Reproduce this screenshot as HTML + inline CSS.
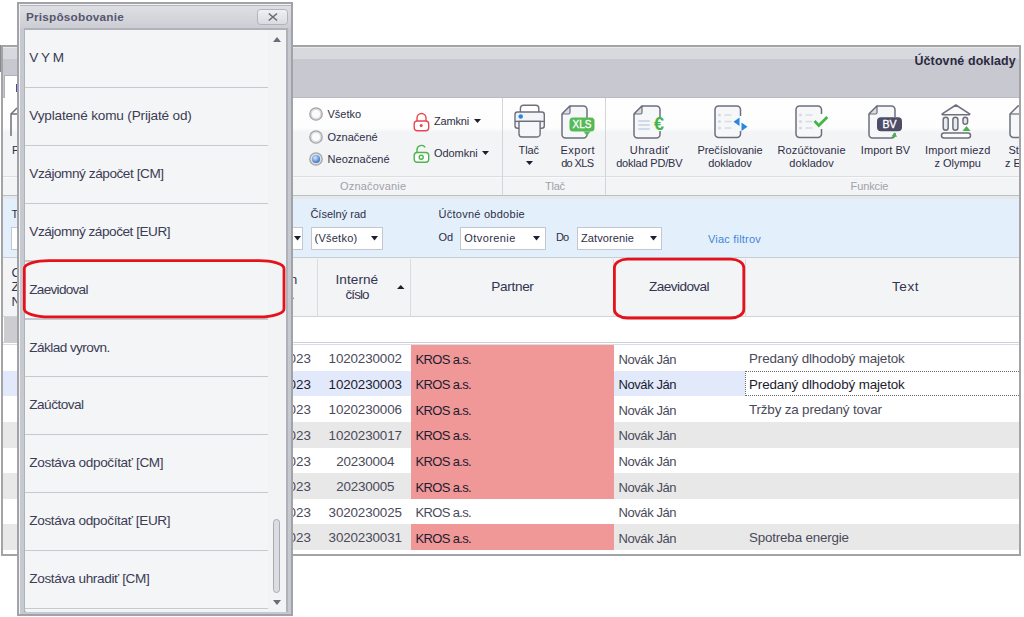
<!DOCTYPE html><html><head><meta charset="utf-8"><style>
*{box-sizing:border-box;margin:0;padding:0}
html,body{width:1024px;height:617px;overflow:hidden;background:#fff;font-family:"Liberation Sans",sans-serif;color:#2e2e44}
.a{position:absolute}
.t{position:absolute;white-space:nowrap;line-height:1}
svg{position:absolute;overflow:visible}
</style></head><body>
<div class="a" style="left:1px;top:45px;width:1020px;height:511px;border:2px solid #a4a4a6;background:#fff"></div>
<div class="a" style="left:0px;top:45px;width:1px;height:27px;background:#8a8a8c"></div>
<div class="a" style="left:3px;top:47px;width:1016px;height:1px;background:#e8e9ec"></div>
<div class="a" style="left:3px;top:48px;width:1016px;height:11px;background:#d8d9de"></div>
<div class="a" style="left:3px;top:59px;width:1016px;height:39px;background:#c8c9d0"></div>
<div class="a" style="left:3px;top:97px;width:1016px;height:1px;background:#babbc2"></div>
<div class="t" style="left:914.5px;top:55.2px;font-size:12.4px;color:#2a2a40;letter-spacing:0.14px;font-weight:bold;">Účtovné doklady</div>
<div class="a" style="left:4px;top:75px;width:20px;height:23px;background:#fff;border-left:1px solid #b0b0b8;border-top:1px solid #b0b0b8"></div>
<div class="a" style="left:15.5px;top:84px;width:1.5px;height:8px;background:#4848a0"></div>
<div class="a" style="left:3px;top:98px;width:1016px;height:97px;background:linear-gradient(#fefefe 0px,#fdfdfd 30px,#f3f4f6 34px,#f3f4f6 100%)"></div>
<div class="a" style="left:3px;top:176px;width:1016px;height:1px;background:#dcdde1"></div>
<div class="a" style="left:3px;top:177px;width:1016px;height:1px;background:#fbfbfc"></div>
<div class="a" style="left:3px;top:194.5px;width:1016px;height:2px;background:#bdbec3"></div>
<svg style="left:9px;top:107px" width="10" height="30" viewBox="0 0 10 30"><path d="M8 1L2 7v22" fill="none" stroke="#6e6f7c" stroke-width="1.5"/><path d="M2 7h8" stroke="#6e6f7c" stroke-width="1.5"/></svg>
<div class="t" style="left:12px;top:144.69px;font-size:11px;color:#2e2e46;">P</div>
<div class="a" style="left:502px;top:98px;width:1px;height:97px;background:#d4d5da"></div>
<div class="a" style="left:605px;top:98px;width:1px;height:97px;background:#d4d5da"></div>
<svg width="0" height="0" style="left:0;top:0"><defs><radialGradient id="rg" cx="0.4" cy="0.35" r="0.75"><stop offset="0" stop-color="#d6e8fb"/><stop offset="0.5" stop-color="#7aa8e6"/><stop offset="1" stop-color="#2e5fb0"/></radialGradient></defs></svg>
<svg style="left:316.2px;top:114.2px" width="1" height="1"><circle cx="0" cy="0" r="6.2" fill="#dcdde1" stroke="#a4a5ab" stroke-width="1.3"/><circle cx="0" cy="0" r="4" fill="#fbfbfc"/></svg>
<svg style="left:316.2px;top:136.7px" width="1" height="1"><circle cx="0" cy="0" r="6.2" fill="#dcdde1" stroke="#a4a5ab" stroke-width="1.3"/><circle cx="0" cy="0" r="4" fill="#fbfbfc"/></svg>
<svg style="left:316.2px;top:159.1px" width="1" height="1"><circle cx="0" cy="0" r="6.2" fill="#dcdde1" stroke="#a4a5ab" stroke-width="1.3"/><circle cx="0" cy="0" r="4" fill="url(#rg)"/></svg>
<div class="t" style="left:327.5px;top:109.19px;font-size:11px;color:#2e2e46;">Všetko</div>
<div class="t" style="left:327.5px;top:132.19px;font-size:11px;color:#2e2e46;">Označené</div>
<div class="t" style="left:327.5px;top:154.09px;font-size:11px;color:#2e2e46;letter-spacing:0.04px;">Neoznačené</div>
<div class="t" style="left:340.1px;top:181.09px;font-size:11px;color:#a0a1aa;letter-spacing:0.17px;">Označovanie</div>
<svg style="left:413px;top:112px" width="17" height="20" viewBox="0 0 17 20"><path d="M4 9V6a4.5 4.5 0 0 1 9 0v3" fill="none" stroke="#e8474f" stroke-width="1.4"/><rect x="1.2" y="9" width="14.5" height="9.8" rx="3" fill="#fff" stroke="#e8474f" stroke-width="1.4"/><circle cx="8.2" cy="13.6" r="1.5" fill="#e8474f"/></svg>
<div class="t" style="left:433.9px;top:116.09px;font-size:11px;color:#2e2e46;letter-spacing:-0.15px;">Zamkni</div>
<svg style="left:473.5px;top:119px" width="7" height="4"><path d="M0 0h7L3.5 4z" fill="#1e1e2e"/></svg>
<svg style="left:413px;top:143.5px" width="17" height="20" viewBox="0 0 17 20"><path d="M4 8.5V6a4.5 4.5 0 0 1 8.2-2.6" fill="none" stroke="#4db44e" stroke-width="1.4"/><rect x="1.2" y="8.5" width="14.5" height="9.8" rx="3" fill="#fff" stroke="#4db44e" stroke-width="1.4"/><circle cx="8.2" cy="13.2" r="2" fill="none" stroke="#4db44e" stroke-width="1.4"/></svg>
<div class="t" style="left:433.9px;top:147.69px;font-size:11px;color:#2e2e46;letter-spacing:-0.02px;">Odomkni</div>
<svg style="left:482px;top:151px" width="7" height="4"><path d="M0 0h7L3.5 4z" fill="#1e1e2e"/></svg>
<svg style="left:513px;top:104px" width="34" height="35" viewBox="0 0 34 35"><rect x="7.4" y="1.2" width="18.4" height="9" rx="3" fill="#fff" stroke="#6e6f7c" stroke-width="1.4"/><rect x="2" y="8" width="29.3" height="16.2" rx="2.5" fill="#f3f4f7" stroke="#6e6f7c" stroke-width="1.4"/><line x1="2" y1="17.4" x2="31.3" y2="17.4" stroke="#6e6f7c" stroke-width="1.4"/><path d="M6 17.4V30a3 3 0 0 0 3 3H24.1a3 3 0 0 0 3 -3V17.4z" fill="#f6f7f9" stroke="#6e6f7c" stroke-width="1.4"/><circle cx="7.7" cy="12.5" r="2.3" fill="#2a86e0"/></svg>
<div class="t" style="left:518.6px;top:144.59px;font-size:11px;color:#2e2e46;letter-spacing:-0.13px;">Tlač</div>
<svg style="left:526px;top:160.7px" width="7" height="4"><path d="M0 0h7L3.5 4z" fill="#1e1e2e"/></svg>
<svg style="left:560.5px;top:104.5px" width="36" height="35" viewBox="0 0 36 35"><path d="M9 1H22.5a3.5 3.5 0 0 1 3.5 3.5V29.5a3.5 3.5 0 0 1 -3.5 3.5H4.5a3.5 3.5 0 0 1 -3.5 -3.5V9z" fill="#f6f7f9"/><path d="M1 9L9 1H22.5a3.5 3.5 0 0 1 3.5 3.5V13M26 27V29.5a3.5 3.5 0 0 1 -3.5 3.5H4.5a3.5 3.5 0 0 1 -3.5 -3.5V9" fill="none" stroke="#6e6f7c" stroke-width="1.5" stroke-linejoin="round"/><path d="M9 1L1 9H7.5a1.5 1.5 0 0 0 1.5 -1.5z" fill="#dcdee6" stroke="#6e6f7c" stroke-width="1.2" stroke-linejoin="round"/><rect x="8.5" y="12.5" width="25" height="14" rx="3.5" fill="#56bb57"/><path d="M22.5 26.5h7l-3.5 4.5z" fill="#56bb57"/><text x="21" y="23" font-size="10" font-family="Liberation Sans" fill="#fff" text-anchor="middle" stroke="#fff" stroke-width="0.3">XLS</text></svg>
<div class="t" style="left:560.55px;top:144.59px;font-size:11px;color:#2e2e46;letter-spacing:0.46px;">Export</div>
<div class="t" style="left:561.15px;top:157.69px;font-size:11px;color:#2e2e46;letter-spacing:-0.64px;">do XLS</div>
<div class="t" style="left:545.0px;top:181.09px;font-size:11px;color:#a0a1aa;letter-spacing:-0.26px;">Tlač</div>
<svg style="left:632.5px;top:104.5px" width="34" height="35" viewBox="0 0 34 35"><path d="M9 1H23.5a3.5 3.5 0 0 1 3.5 3.5V29.5a3.5 3.5 0 0 1 -3.5 3.5H4.5a3.5 3.5 0 0 1 -3.5 -3.5V9z" fill="#f6f7f9"/><path d="M1 9L9 1H23.5a3.5 3.5 0 0 1 3.5 3.5V12M27 26V29.5a3.5 3.5 0 0 1 -3.5 3.5H4.5a3.5 3.5 0 0 1 -3.5 -3.5V9" fill="none" stroke="#6e6f7c" stroke-width="1.5" stroke-linejoin="round"/><path d="M9 1L1 9H7.5a1.5 1.5 0 0 0 1.5 -1.5z" fill="#dcdee6" stroke="#6e6f7c" stroke-width="1.2" stroke-linejoin="round"/><rect x="5" y="15" width="12" height="2" rx="1" fill="#cfdaea"/><rect x="5" y="19" width="12" height="2" rx="1" fill="#cfdaea"/><rect x="5" y="23" width="12" height="2" rx="1" fill="#cfdaea"/><text x="26" y="24.5" font-size="18" font-family="Liberation Sans" font-weight="bold" fill="#45b548" text-anchor="middle">€</text></svg>
<div class="t" style="left:629.85px;top:144.59px;font-size:11px;color:#2e2e46;letter-spacing:0.43px;">Uhradiť</div>
<div class="t" style="left:616.2px;top:157.69px;font-size:11px;color:#2e2e46;letter-spacing:-0.19px;">doklad PD/BV</div>
<svg style="left:713.5px;top:104.5px" width="36" height="35" viewBox="0 0 36 35"><path d="M4.5 1H23a3.5 3.5 0 0 1 3.5 3.5V29a3.5 3.5 0 0 1 -3.5 3.5H4.5A3.5 3.5 0 0 1 1 29V4.5A3.5 3.5 0 0 1 4.5 1z" fill="#f6f7f9"/><path d="M26.5 26V29a3.5 3.5 0 0 1 -3.5 3.5H4.5A3.5 3.5 0 0 1 1 29V4.5A3.5 3.5 0 0 1 4.5 1H23a3.5 3.5 0 0 1 3.5 3.5V11" fill="none" stroke="#6e6f7c" stroke-width="1.5"/><circle cx="5.5" cy="10" r="1.6" fill="#d6dbe4"/><circle cx="5.5" cy="16.5" r="1.6" fill="#d6dbe4"/><circle cx="5.5" cy="23" r="1.6" fill="#d6dbe4"/><rect x="10.5" y="9.3" width="7" height="1.5" fill="#d6dbe4"/><rect x="10.5" y="15.8" width="7" height="1.5" fill="#d6dbe4"/><rect x="10.5" y="22.3" width="7" height="1.5" fill="#d6dbe4"/><path d="M25.5 12.5v8.5l-6-4.25z" fill="#2a86e0"/><path d="M27.5 17.5v8.5l6-4.25z" fill="#2a86e0"/></svg>
<div class="t" style="left:697.4px;top:144.59px;font-size:11px;color:#2e2e46;letter-spacing:-0.07px;">Prečíslovanie</div>
<div class="t" style="left:708.15px;top:157.69px;font-size:11px;color:#2e2e46;letter-spacing:-0.05px;">dokladov</div>
<svg style="left:794.5px;top:104.5px" width="36" height="35" viewBox="0 0 36 35"><path d="M4.5 1H23a3.5 3.5 0 0 1 3.5 3.5V29a3.5 3.5 0 0 1 -3.5 3.5H4.5A3.5 3.5 0 0 1 1 29V4.5A3.5 3.5 0 0 1 4.5 1z" fill="#f6f7f9"/><path d="M26.5 24V29a3.5 3.5 0 0 1 -3.5 3.5H4.5A3.5 3.5 0 0 1 1 29V4.5A3.5 3.5 0 0 1 4.5 1H23a3.5 3.5 0 0 1 3.5 3.5V9" fill="none" stroke="#6e6f7c" stroke-width="1.5"/><circle cx="5.5" cy="10" r="1.6" fill="#d6dbe4"/><circle cx="5.5" cy="16.5" r="1.6" fill="#d6dbe4"/><circle cx="5.5" cy="23" r="1.6" fill="#d6dbe4"/><rect x="10.5" y="9.3" width="7" height="1.5" fill="#d6dbe4"/><rect x="10.5" y="15.8" width="7" height="1.5" fill="#d6dbe4"/><rect x="10.5" y="22.3" width="7" height="1.5" fill="#d6dbe4"/><path d="M19.5 16l4.3 4.5 8.5-8.5" fill="none" stroke="#45b548" stroke-width="2.8"/></svg>
<div class="t" style="left:777.45px;top:144.59px;font-size:11px;color:#2e2e46;letter-spacing:0.13px;">Rozúčtovanie</div>
<div class="t" style="left:789.35px;top:157.69px;font-size:11px;color:#2e2e46;letter-spacing:0.04px;">dokladov</div>
<svg style="left:868px;top:104.5px" width="36" height="35" viewBox="0 0 36 35"><path d="M9 1H23.5a3.5 3.5 0 0 1 3.5 3.5V29.5a3.5 3.5 0 0 1 -3.5 3.5H4.5a3.5 3.5 0 0 1 -3.5 -3.5V9z" fill="#f6f7f9"/><path d="M1 9L9 1H23.5a3.5 3.5 0 0 1 3.5 3.5V12M27 28V29.5a3.5 3.5 0 0 1 -3.5 3.5H4.5a3.5 3.5 0 0 1 -3.5 -3.5V9" fill="none" stroke="#6e6f7c" stroke-width="1.5" stroke-linejoin="round"/><path d="M9 1L1 9H7.5a1.5 1.5 0 0 0 1.5 -1.5z" fill="#dcdee6" stroke="#6e6f7c" stroke-width="1.2" stroke-linejoin="round"/><rect x="9" y="12.3" width="25" height="14" rx="4" fill="#4e4c66"/><text x="21.5" y="23" font-size="10.5" font-family="Liberation Sans" fill="#fff" stroke="#fff" stroke-width="0.35" text-anchor="middle">BV</text><path d="M23.5 31.8l2.8-4.5 2.8 4.5z" fill="#45b548"/></svg>
<div class="t" style="left:860.8px;top:144.59px;font-size:11px;color:#2e2e46;letter-spacing:0.06px;">Import BV</div>
<svg style="left:940px;top:104px" width="32" height="35" viewBox="0 0 32 35"><path d="M2.2 9.8L15.9 1 29.6 9.8a0.6 0.6 0 0 1 -0.3 1H2.5a0.6 0.6 0 0 1 -0.3 -1z" fill="#fbfbfc" stroke="#6e6f7c" stroke-width="1.5" stroke-linejoin="round"/><rect x="3.2" y="13.3" width="5" height="13" rx="2.5" fill="#e6ebf2" stroke="#6e6f7c" stroke-width="1.5"/><rect x="12.9" y="13.3" width="5" height="13" rx="2.5" fill="#e6ebf2" stroke="#6e6f7c" stroke-width="1.5"/><rect x="23" y="13.3" width="4.6" height="7" rx="2.3" fill="#e6ebf2" stroke="#6e6f7c" stroke-width="1.5"/><path d="M22.5 27l4-5 4 5z" fill="#45b548"/><rect x="1.5" y="29" width="29" height="5" rx="2.5" fill="#fbfbfc" stroke="#6e6f7c" stroke-width="1.5"/></svg>
<div class="t" style="left:925.1px;top:144.59px;font-size:11px;color:#2e2e46;letter-spacing:0.15px;">Import miezd</div>
<div class="t" style="left:934.45px;top:157.69px;font-size:11px;color:#2e2e46;letter-spacing:0.01px;">z Olympu</div>
<svg style="left:1008.5px;top:104.5px" width="14" height="35" viewBox="0 0 14 35"><path d="M14 1H9L1 9V29a3.5 3.5 0 0 0 3.5 3.5H14" fill="#f6f7f9" stroke="#6e6f7c" stroke-width="1.5"/><path d="M1 9H14" stroke="#6e6f7c" stroke-width="1.2"/></svg>
<div class="t" style="left:1008.5px;top:144.59px;font-size:11px;color:#2e2e46;">St</div>
<div class="t" style="left:1005px;top:157.69px;font-size:11px;color:#2e2e46;">z E</div>
<div class="t" style="left:850.5px;top:181.09px;font-size:11px;color:#a0a1aa;letter-spacing:-0.09px;">Funkcie</div>
<div class="a" style="left:1019px;top:47px;width:2px;height:509px;background:#a4a4a6"></div>
<div class="a" style="left:1021px;top:44px;width:3px;height:513px;background:#fff"></div>
<div class="a" style="left:3px;top:196px;width:1016px;height:61px;background:#e3f0fb"></div>
<div class="a" style="left:3px;top:196px;width:1016px;height:3px;background:#e7e8eb"></div>
<div class="a" style="left:3px;top:257px;width:1016px;height:1px;background:#c8ccd3"></div>
<div class="t" style="left:310.4px;top:208.79px;font-size:11px;color:#2e2e46;letter-spacing:0.02px;">Číselný rad</div>
<div class="a" style="left:270px;top:227px;width:33px;height:23px;background:#fff;border:1px solid #c3c8d0"></div>
<svg style="left:294px;top:236.3px" width="7" height="4.5"><path d="M0 0h7L3.5 4.5z" fill="#1e1e2e"/></svg>
<div class="a" style="left:311px;top:227px;width:72px;height:23px;background:#fff;border:1px solid #c3c8d0"></div>
<div class="t" style="left:314.5px;top:233.19px;font-size:11px;color:#2e2e46;letter-spacing:0.25px;">(Všetko)</div>
<svg style="left:371.2px;top:236.3px" width="7" height="4.5"><path d="M0 0h7L3.5 4.5z" fill="#1e1e2e"/></svg>
<div class="t" style="left:438.5px;top:209.49px;font-size:11px;color:#2e2e46;letter-spacing:0.26px;">Účtovné obdobie</div>
<div class="t" style="left:438.5px;top:232.29px;font-size:11px;color:#2e2e46;letter-spacing:0.03px;">Od</div>
<div class="a" style="left:460px;top:227px;width:86px;height:23px;background:#fff;border:1px solid #c3c8d0"></div>
<div class="t" style="left:464.3px;top:233.19px;font-size:11px;color:#2e2e46;letter-spacing:0.41px;">Otvorenie</div>
<svg style="left:533px;top:236.3px" width="7" height="4.5"><path d="M0 0h7L3.5 4.5z" fill="#1e1e2e"/></svg>
<div class="t" style="left:556px;top:232.29px;font-size:11px;color:#2e2e46;letter-spacing:-1.06px;">Do</div>
<div class="a" style="left:577px;top:227px;width:85px;height:23px;background:#fff;border:1px solid #c3c8d0"></div>
<div class="t" style="left:581px;top:233.19px;font-size:11px;color:#2e2e46;letter-spacing:0.11px;">Zatvorenie</div>
<svg style="left:649.5px;top:236.3px" width="7" height="4.5"><path d="M0 0h7L3.5 4.5z" fill="#1e1e2e"/></svg>
<div class="t" style="left:708px;top:234.19px;font-size:11px;color:#3f86da;letter-spacing:0.2px;">Viac filtrov</div>
<div class="a" style="left:3px;top:258px;width:1016px;height:58px;background:#f3f4f6"></div>
<div class="a" style="left:3px;top:315.5px;width:1016px;height:1.2px;background:#d2d3d8"></div>
<div class="a" style="left:317px;top:259px;width:1px;height:56.5px;background:#dadbe0"></div>
<div class="a" style="left:410px;top:259px;width:1px;height:56.5px;background:#dadbe0"></div>
<div class="a" style="left:613px;top:259px;width:1px;height:56.5px;background:#dadbe0"></div>
<div class="a" style="left:745px;top:259px;width:1px;height:56.5px;background:#dadbe0"></div>
<div class="a" style="left:3px;top:316.7px;width:1016px;height:25.8px;background:#fff"></div>
<div class="a" style="left:3px;top:342px;width:1016px;height:1.2px;background:#d0d1d8"></div>
<div class="a" style="left:3px;top:344.2px;width:1016px;height:1px;background:#dcdde2"></div>
<div class="t" style="left:335.5px;top:272.79px;font-size:13.6px;color:#34344e;letter-spacing:0.06px;">Interné</div>
<div class="t" style="left:345.5px;top:287.86px;font-size:13.4px;color:#34344e;letter-spacing:-0.89px;">číslo</div>
<svg style="left:397px;top:284.7px" width="7.5" height="4"><path d="M0 4h7.5L3.75 0z" fill="#1e1e2e"/></svg>
<div class="t" style="left:491.3px;top:279.99px;font-size:13.6px;color:#34344e;letter-spacing:-0.33px;">Partner</div>
<div class="t" style="left:649px;top:279.99px;font-size:13.6px;color:#34344e;letter-spacing:-0.57px;">Zaevidoval</div>
<div class="t" style="left:892px;top:280.49px;font-size:13.6px;color:#34344e;letter-spacing:0.52px;">Text</div>
<div class="t" style="left:290px;top:273.3px;font-size:13px;color:#34344e;">n</div>
<div class="t" style="left:291px;top:288.2px;font-size:13px;color:#34344e;">.</div>
<div class="a" style="left:4px;top:316.5px;width:13px;height:26px;background:#cdcdd1"></div>
<div class="t" style="left:11.5px;top:265.6px;font-size:13px;color:#34344e;">C</div>
<div class="t" style="left:11.5px;top:280.0px;font-size:13px;color:#34344e;">Z</div>
<div class="t" style="left:11.5px;top:295.0px;font-size:13px;color:#34344e;">N</div>
<div class="t" style="left:11.5px;top:208.79px;font-size:11px;color:#2e2e46;">T</div>
<div class="a" style="left:11px;top:227px;width:20px;height:23px;background:#fff;border:1px solid #c3c8d0"></div>
<div class="a" style="left:411.3px;top:345.2px;width:202.7px;height:25.6px;background:#f09797"></div>
<div class="t" style="left:288.54px;top:352.26px;font-size:13.4px;color:#4a4a5a;">023</div>
<div class="t" style="left:328.6px;top:352.26px;font-size:13.4px;color:#4a4a5a;letter-spacing:-0.13px;">1020230002</div>
<div class="t" style="left:415.6px;top:352.6px;font-size:13px;color:#1c1c30;letter-spacing:-0.68px;">KROS a.s.</div>
<div class="t" style="left:618.5px;top:352.6px;font-size:13px;color:#4a4a5a;letter-spacing:-0.42px;">Novák Ján</div>
<div class="t" style="left:749px;top:352.26px;font-size:13.4px;color:#4a4a5a;letter-spacing:-0.12px;">Predaný dlhodobý majetok</div>
<div class="a" style="left:3px;top:370.8px;width:1016px;height:25.6px;background:#e2e9fa"></div>
<div class="a" style="left:745px;top:371.2px;width:274px;height:25.2px;background:#fff;border:1px dotted #6a6a72;border-right:none"></div>
<div class="a" style="left:411.3px;top:370.8px;width:202.7px;height:25.6px;background:#f09797"></div>
<div class="t" style="left:288.54px;top:377.86px;font-size:13.4px;color:#1c1c30;">023</div>
<div class="t" style="left:328.6px;top:377.86px;font-size:13.4px;color:#1c1c30;letter-spacing:-0.13px;">1020230003</div>
<div class="t" style="left:415.6px;top:378.2px;font-size:13px;color:#1c1c30;letter-spacing:-0.68px;">KROS a.s.</div>
<div class="t" style="left:618.5px;top:378.2px;font-size:13px;color:#1c1c30;letter-spacing:-0.42px;">Novák Ján</div>
<div class="t" style="left:749px;top:377.86px;font-size:13.4px;color:#1c1c30;letter-spacing:-0.12px;">Predaný dlhodobý majetok</div>
<div class="a" style="left:411.3px;top:396.4px;width:202.7px;height:25.6px;background:#f09797"></div>
<div class="t" style="left:288.54px;top:403.46px;font-size:13.4px;color:#4a4a5a;">023</div>
<div class="t" style="left:328.6px;top:403.46px;font-size:13.4px;color:#4a4a5a;letter-spacing:-0.13px;">1020230006</div>
<div class="t" style="left:415.6px;top:403.8px;font-size:13px;color:#1c1c30;letter-spacing:-0.68px;">KROS a.s.</div>
<div class="t" style="left:618.5px;top:403.8px;font-size:13px;color:#4a4a5a;letter-spacing:-0.42px;">Novák Ján</div>
<div class="t" style="left:749px;top:403.46px;font-size:13.4px;color:#4a4a5a;letter-spacing:-0.16px;">Tržby za predaný tovar</div>
<div class="a" style="left:3px;top:422.0px;width:1016px;height:25.6px;background:#e8e8e8"></div>
<div class="a" style="left:411.3px;top:422.0px;width:202.7px;height:25.6px;background:#f09797"></div>
<div class="t" style="left:288.54px;top:429.06px;font-size:13.4px;color:#4a4a5a;">023</div>
<div class="t" style="left:328.6px;top:429.06px;font-size:13.4px;color:#4a4a5a;letter-spacing:-0.13px;">1020230017</div>
<div class="t" style="left:415.6px;top:429.4px;font-size:13px;color:#1c1c30;letter-spacing:-0.68px;">KROS a.s.</div>
<div class="t" style="left:618.5px;top:429.4px;font-size:13px;color:#4a4a5a;letter-spacing:-0.42px;">Novák Ján</div>
<div class="a" style="left:411.3px;top:447.6px;width:202.7px;height:25.6px;background:#f09797"></div>
<div class="t" style="left:288.54px;top:454.66px;font-size:13.4px;color:#4a4a5a;">023</div>
<div class="t" style="left:336.15px;top:454.66px;font-size:13.4px;color:#4a4a5a;letter-spacing:-0.19px;">20230004</div>
<div class="t" style="left:415.6px;top:455.0px;font-size:13px;color:#1c1c30;letter-spacing:-0.68px;">KROS a.s.</div>
<div class="t" style="left:618.5px;top:455.0px;font-size:13px;color:#4a4a5a;letter-spacing:-0.42px;">Novák Ján</div>
<div class="a" style="left:3px;top:473.2px;width:1016px;height:25.6px;background:#e8e8e8"></div>
<div class="a" style="left:411.3px;top:473.2px;width:202.7px;height:25.6px;background:#f09797"></div>
<div class="t" style="left:288.54px;top:480.26px;font-size:13.4px;color:#4a4a5a;">023</div>
<div class="t" style="left:336.15px;top:480.26px;font-size:13.4px;color:#4a4a5a;letter-spacing:-0.19px;">20230005</div>
<div class="t" style="left:415.6px;top:480.6px;font-size:13px;color:#1c1c30;letter-spacing:-0.68px;">KROS a.s.</div>
<div class="t" style="left:618.5px;top:480.6px;font-size:13px;color:#4a4a5a;letter-spacing:-0.42px;">Novák Ján</div>
<div class="t" style="left:288.54px;top:505.86px;font-size:13.4px;color:#4a4a5a;">023</div>
<div class="t" style="left:328.6px;top:505.86px;font-size:13.4px;color:#4a4a5a;letter-spacing:-0.13px;">3020230025</div>
<div class="t" style="left:415.6px;top:506.2px;font-size:13px;color:#4a4a5a;letter-spacing:-0.68px;">KROS a.s.</div>
<div class="t" style="left:618.5px;top:506.2px;font-size:13px;color:#4a4a5a;letter-spacing:-0.42px;">Novák Ján</div>
<div class="a" style="left:3px;top:524.4px;width:1016px;height:25.6px;background:#e8e8e8"></div>
<div class="a" style="left:411.3px;top:524.4px;width:202.7px;height:25.6px;background:#f09797"></div>
<div class="t" style="left:288.54px;top:531.46px;font-size:13.4px;color:#4a4a5a;">023</div>
<div class="t" style="left:328.6px;top:531.46px;font-size:13.4px;color:#4a4a5a;letter-spacing:-0.13px;">3020230031</div>
<div class="t" style="left:415.6px;top:531.8px;font-size:13px;color:#1c1c30;letter-spacing:-0.68px;">KROS a.s.</div>
<div class="t" style="left:618.5px;top:531.8px;font-size:13px;color:#4a4a5a;letter-spacing:-0.42px;">Novák Ján</div>
<div class="t" style="left:749px;top:531.46px;font-size:13.4px;color:#4a4a5a;letter-spacing:-0.18px;">Spotreba energie</div>
<div class="a" style="left:17px;top:2px;width:276px;height:614px;border:2px solid #a3a3a7;background:#c7c9d1"></div>
<div class="a" style="left:19px;top:4px;width:272px;height:1px;background:#f2f2f4"></div>
<div class="a" style="left:19px;top:4px;width:1px;height:610px;background:#f2f2f4"></div>
<div class="a" style="left:20px;top:5px;width:271px;height:1px;background:#b4b6bf"></div>
<div class="a" style="left:20px;top:6px;width:271px;height:22px;background:linear-gradient(#dedfe4,#cdced5)"></div>
<div class="t" style="left:26px;top:12.21px;font-size:11.8px;color:#55566e;letter-spacing:0.19px;font-weight:bold;">Prispôsobovanie</div>
<div class="a" style="left:257px;top:9px;width:31px;height:16px;border:1px solid #b3b4bb;border-radius:3.5px;background:linear-gradient(#eff0f3,#dadbe1)"></div>
<svg style="left:267.5px;top:13px" width="10" height="8" viewBox="0 0 10 8"><path d="M0.8 0.5L9 7.5M9 0.5L0.8 7.5" stroke="#6a6b7a" stroke-width="1.6"/></svg>
<div class="a" style="left:23.5px;top:28px;width:264.5px;height:584px;background:#f2f3f5;border:2px solid #b0b2ba;border-bottom:none"></div>
<div class="a" style="left:25px;top:30px;width:243px;height:581px;background:#f4f5f7"></div>
<div class="t" style="left:29.3px;top:51.39px;font-size:13.6px;color:#3c3c54;letter-spacing:-0.43px;">V Y M</div>
<div class="a" style="left:25px;top:86.9px;width:243px;height:1.3px;background:#c8c9cf"></div>
<div class="t" style="left:29.3px;top:109.24px;font-size:13.6px;color:#3c3c54;letter-spacing:-0.18px;">Vyplatené komu (Prijaté od)</div>
<div class="a" style="left:25px;top:144.75px;width:243px;height:1.3px;background:#c8c9cf"></div>
<div class="t" style="left:29.3px;top:167.09px;font-size:13.6px;color:#3c3c54;letter-spacing:-0.44px;">Vzájomný zápočet [CM]</div>
<div class="a" style="left:25px;top:202.6px;width:243px;height:1.3px;background:#c8c9cf"></div>
<div class="t" style="left:29.3px;top:224.94px;font-size:13.6px;color:#3c3c54;letter-spacing:-0.47px;">Vzájomný zápočet [EUR]</div>
<div class="a" style="left:25px;top:260.45px;width:243px;height:1.3px;background:#c8c9cf"></div>
<div class="t" style="left:29.3px;top:282.79px;font-size:13.6px;color:#3c3c54;letter-spacing:-0.73px;">Zaevidoval</div>
<div class="a" style="left:25px;top:318.3px;width:243px;height:1.3px;background:#c8c9cf"></div>
<div class="t" style="left:29.3px;top:340.64px;font-size:13.6px;color:#3c3c54;letter-spacing:-0.57px;">Základ vyrovn.</div>
<div class="a" style="left:25px;top:376.15px;width:243px;height:1.3px;background:#c8c9cf"></div>
<div class="t" style="left:29.3px;top:398.49px;font-size:13.6px;color:#3c3c54;letter-spacing:-0.53px;">Zaúčtoval</div>
<div class="a" style="left:25px;top:434.0px;width:243px;height:1.3px;background:#c8c9cf"></div>
<div class="t" style="left:29.3px;top:456.34px;font-size:13.6px;color:#3c3c54;letter-spacing:-0.36px;">Zostáva odpočítať [CM]</div>
<div class="a" style="left:25px;top:491.85px;width:243px;height:1.3px;background:#c8c9cf"></div>
<div class="t" style="left:29.3px;top:514.19px;font-size:13.6px;color:#3c3c54;letter-spacing:-0.37px;">Zostáva odpočítať [EUR]</div>
<div class="a" style="left:25px;top:549.7px;width:243px;height:1.3px;background:#c8c9cf"></div>
<div class="t" style="left:29.3px;top:572.04px;font-size:13.6px;color:#3c3c54;letter-spacing:-0.37px;">Zostáva uhradiť [CM]</div>
<div class="a" style="left:25px;top:607.55px;width:243px;height:1.3px;background:#c8c9cf"></div>
<svg style="left:272.5px;top:36.5px" width="8" height="5"><path d="M0 5h8L4 0z" fill="#6b6c78"/></svg>
<svg style="left:272.5px;top:600px" width="8" height="5"><path d="M0 0h8L4 5z" fill="#6b6c78"/></svg>
<div class="a" style="left:273px;top:519px;width:7.2px;height:74px;border:1px solid #a9aab2;border-radius:4px;background:#dcdde3"></div>
<svg style="left:0;top:0" width="1024" height="617"><rect x="614.4" y="259.2" width="129.4" height="58.8" rx="13" ry="8.5" fill="none" stroke="#e5121b" stroke-width="2.8"/><rect x="24.3" y="260.6" width="259.7" height="56.3" rx="25" ry="8" fill="none" stroke="#e5121b" stroke-width="2.8"/></svg>
</body></html>
